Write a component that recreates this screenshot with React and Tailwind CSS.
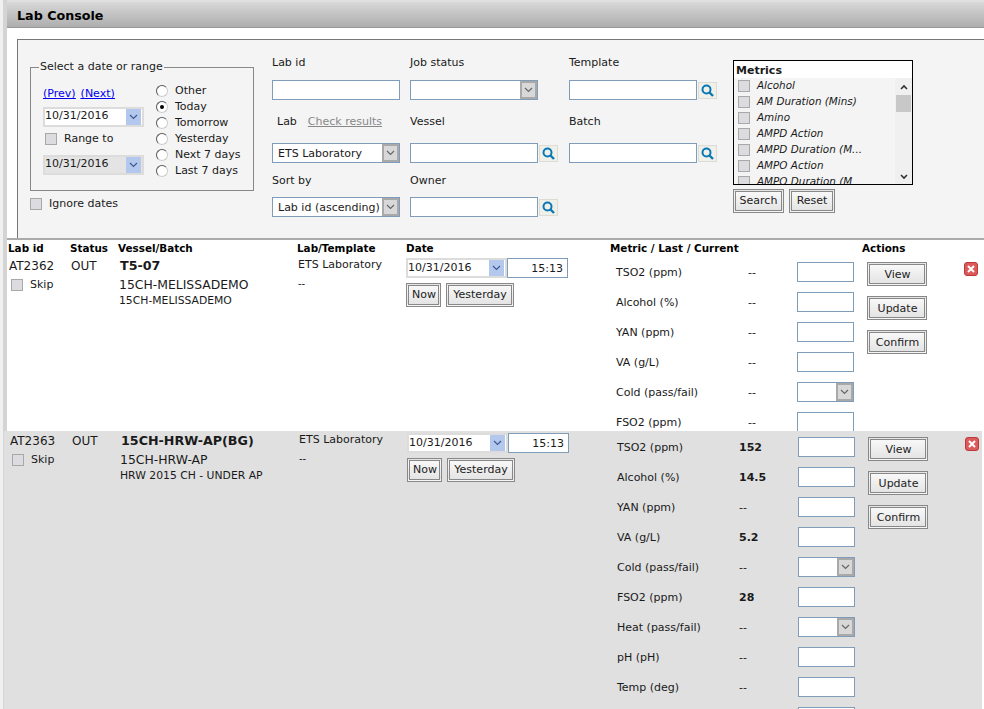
import React from 'react';

const inputCls = "block h-[20px] border border-[#7f9db9] bg-white px-1 text-[11px] outline-none";

function Chevron({ color = "#666" }) {
    return (
        <svg width="9" height="6" viewBox="0 0 9 6" fill="none">
            <path d="M1 1l3.5 3.5L8 1" stroke={color} strokeWidth="1.2" />
        </svg>
    );
}

function SearchIcon() {
    return (
        <span className="flex h-[17px] w-[19px] shrink-0 items-center justify-center border border-[#dcdcd4] bg-[#f0f0ea]">
            <svg width="13" height="13" viewBox="0 0 13 13" fill="none">
                <circle cx="5.5" cy="5.5" r="4" stroke="#0a78b4" strokeWidth="2" />
                <path d="M8.5 8.5l3.5 3.5" stroke="#0a78b4" strokeWidth="2.4" />
            </svg>
        </span>
    );
}

function Select({ value, width = "w-[128px]" }) {
    return (
        <div className={`flex h-[20px] items-stretch border border-[#7f9db9] bg-white ${width}`}>
            <span className="flex-1 overflow-hidden whitespace-nowrap pl-[5px] leading-[20px]">{value}</span>
            <span className="flex w-[17px] items-center justify-center border-2 border-[#a9a9a9] bg-[#d8d8d8]">
                <Chevron />
            </span>
        </div>
    );
}

function DateBox({ disabled, className = "" }) {
    return (
        <div className={`flex h-[20px] w-[101px] items-center justify-between border-2 border-[#dcdcdc] pr-[1px] ${disabled ? 'bg-[#e4e4e4]' : 'bg-white'} ${className}`}>
            <span>10/31/2016</span>
            <span className="flex h-[16px] w-[15px] items-center justify-center bg-[#b4c8ee]">
                <Chevron color="#3a5a94" />
            </span>
        </div>
    );
}

function Check({ label, italic }) {
    return (
        <label className="flex items-center">
            <input type="checkbox" className="h-[12px] w-[12px] shrink-0 appearance-none border border-[#a8a8a8] bg-[#dcdce0]" />
            {label && <span className={italic ? "ml-[7px] text-[10.4px] italic" : "ml-[7px]"}>{label}</span>}
        </label>
    );
}

function Radio({ label, checked }) {
    return (
        <div className="flex h-[16px] items-center">
            <span className="flex h-[12px] w-[12px] items-center justify-center rounded-full border border-t-[#555] border-l-[#555] border-r-[#ccc] border-b-[#ccc] bg-white">
                {checked && <span className="h-[4px] w-[4px] rounded-full bg-black" />}
            </span>
            <span className="ml-[7px]">{label}</span>
        </div>
    );
}

function Btn({ children, className = "" }) {
    return (
        <button type="button" className={`h-[24px] border-[3px] border-double border-[#888] bg-gradient-to-b from-[#f8f8f8] to-[#e4e4e4] text-[11px] text-[#222] ${className}`}>
            {children}
        </button>
    );
}

function Field({ label, children, className = "", labelCls = "h-[25px]" }) {
    return (
        <div className={className}>
            <div className={labelCls}>{label}</div>
            {children}
        </div>
    );
}

function LookupField({ label, className, labelCls }) {
    return (
        <Field label={label} className={className} labelCls={labelCls}>
            <div className="flex items-center gap-[1px]">
                <input className={`${inputCls} w-[128px]`} />
                <SearchIcon />
            </div>
        </Field>
    );
}

function MetricRow({ name, last, select, nameCls, lastCls }) {
    return (
        <div className="flex h-[30px] shrink-0 items-center">
            <span className={`${nameCls} pt-[2px]`}>{name}</span>
            <span className={`${lastCls} pt-[2px] ${last === '--' ? '' : 'font-bold'}`}>{last}</span>
            {select ? <Select value="" width="w-[57px]" /> : <input className={`${inputCls} w-[57px]`} />}
        </div>
    );
}

function JobRow({ labId, vessel, batch, batch2, metrics, nameCls, lastCls, className = "" }) {
    return (
        <div className={`flex items-start overflow-hidden ${className}`}>
            <div className="w-[62px] shrink-0 pl-[2px] pt-[3px]">
                <div className="text-[12px] leading-[15px]">{labId}</div>
                <div className="mt-[3px] pl-[2px]"><Check label="Skip" /></div>
            </div>
            <div className="w-[50px] shrink-0 pl-[2px] pt-[3px] text-[12px] leading-[15px]">OUT</div>
            <div className="w-[179px] shrink-0 pt-[2px]">
                <div className="pl-[1px] text-[12.7px] font-bold leading-[15px]">{vessel}</div>
                <div className="mt-[4px] text-[12.4px] leading-[15px]">{batch}</div>
                <div className="mt-[2px] text-[10.8px] leading-[14px]">{batch2}</div>
            </div>
            <div className="w-[108px] shrink-0 pt-[2px]">
                <div className="leading-[14px]">ETS Laboratory</div>
                <div className="mt-[4px] text-[10px]">--</div>
            </div>
            <div className="w-[204px] shrink-0 pt-[2px]">
                <div className="flex">
                    <DateBox />
                    <input defaultValue="15:13" className={`${inputCls} w-[61px] text-right`} />
                </div>
                <div className="mt-[5px] flex gap-[5px]">
                    <Btn className="w-[35px] pl-[1px]">Now</Btn>
                    <Btn className="w-[68px]">Yesterday</Btn>
                </div>
            </div>
            <div className="flex w-[257px] shrink-0 flex-col pt-[1px]">
                {metrics.map((m, i) => <MetricRow key={i} {...m} nameCls={nameCls} lastCls={lastCls} />)}
            </div>
            <div className="flex w-[97px] shrink-0 flex-col gap-[10px] pt-[6px]">
                <Btn className="w-[60px] pl-[1px] pt-[2px]">View</Btn>
                <Btn className="w-[60px] pl-[1px] pt-[2px]">Update</Btn>
                <Btn className="w-[60px] pl-[1px] pt-[2px]">Confirm</Btn>
            </div>
            <div className="mt-[6px] flex h-[14px] w-[14px] items-center justify-center rounded-[3px] border border-[#b83a3a] bg-[#dc5a5a]">
                <svg width="8" height="8" viewBox="0 0 8 8"><path d="M1 1l6 6M7 1l-6 6" stroke="#fff" strokeWidth="2" /></svg>
            </div>
        </div>
    );
}

const metricItems = ["Alcohol", "AM Duration (Mins)", "Amino", "AMPD Action", "AMPD Duration (M...", "AMPO Action", "AMPO Duration (M"];

const row1 = [
    { name: "TSO2 (ppm)", last: "--" },
    { name: "Alcohol (%)", last: "--" },
    { name: "YAN (ppm)", last: "--" },
    { name: "VA (g/L)", last: "--" },
    { name: "Cold (pass/fail)", last: "--", select: true },
    { name: "FSO2 (ppm)", last: "--" },
];

const row2 = [
    { name: "TSO2 (ppm)", last: "152" },
    { name: "Alcohol (%)", last: "14.5" },
    { name: "YAN (ppm)", last: "--" },
    { name: "VA (g/L)", last: "5.2" },
    { name: "Cold (pass/fail)", last: "--", select: true },
    { name: "FSO2 (ppm)", last: "28" },
    { name: "Heat (pass/fail)", last: "--", select: true },
    { name: "pH (pH)", last: "--" },
    { name: "Temp (deg)", last: "--" },
    { name: "", last: "" },
];

export default function App() {
    return (
        <div className="flex h-[709px] w-[984px] overflow-hidden bg-white font-['DejaVu_Sans',sans-serif] text-[11px] text-[#1a1a1a]">
            <div className="w-[7px] shrink-0 border-r-4 border-[#d4d4d4] bg-[#f0f0f0]" />
            <div className="flex min-w-0 flex-1 flex-col">
                <div className="h-[2px] shrink-0 bg-[#e0e0e0]" />
                <div className="flex h-[26px] shrink-0 items-center border-b border-[#999] bg-gradient-to-b from-[#d8d8d8] to-[#aeaeae] pl-[10px] pt-[2px] text-[12.7px] font-bold text-black">
                    Lab Console
                </div>

                {/* Filters */}
                <div className="ml-[10px] mt-[11px] flex h-[199px] shrink-0 border-l border-t border-[#777] bg-[#f4f4f4] pt-[15px]">
                    <div className="ml-[12px] mt-[5px] w-[242px] shrink-0">
                        <fieldset className="h-[131px] w-[224px] border border-[#888] pl-[12px]">
                            <legend className="ml-[-4px] px-[1px] leading-[14px]">Select a date or range</legend>
                            <div className="mt-[10px] flex">
                                <div className="w-[113px] shrink-0">
                                    <div className="mt-[2px] flex gap-[5px] text-[#0000ee] underline">
                                        <a>(Prev)</a><a>(Next)</a>
                                    </div>
                                    <DateBox className="mt-[4px]" />
                                    <div className="ml-[2px] mt-[4px] h-[17px]"><Check label="Range to" /></div>
                                    <DateBox disabled className="mt-[7px]" />
                                </div>
                                <div className="-mt-px">
                                    <Radio label="Other" />
                                    <Radio label="Today" checked />
                                    <Radio label="Tomorrow" />
                                    <Radio label="Yesterday" />
                                    <Radio label="Next 7 days" />
                                    <Radio label="Last 7 days" />
                                </div>
                            </div>
                        </fieldset>
                        <div className="mt-[5px]"><Check label="Ignore dates" /></div>
                    </div>
                    <div className="w-[138px] shrink-0">
                        <Field label="Lab id" className="h-[59px]"><input className={`${inputCls} w-[128px]`} /></Field>
                        <div className="flex h-[29px] items-start pl-[5px]">
                            <span>Lab</span>
                            <a className="ml-[11px] text-[#888] underline">Check results</a>
                        </div>
                        <div className="h-[30px]"><Select value="ETS Laboratory" /></div>
                        <Field label="Sort by" labelCls="h-[24px]"><Select value="Lab id (ascending)" /></Field>
                    </div>
                    <div className="w-[159px] shrink-0">
                        <Field label="Job status" className="h-[59px]"><Select value="" /></Field>
                        <LookupField label="Vessel" className="h-[59px]" labelCls="h-[29px]" />
                        <LookupField label="Owner" labelCls="h-[24px]" />
                    </div>
                    <div className="w-[164px] shrink-0">
                        <LookupField label="Template" className="h-[59px]" />
                        <LookupField label="Batch" labelCls="h-[29px]" />
                    </div>
                    <div className="mt-[5px] w-[180px] shrink-0">
                        <div className="h-[125px] w-[180px] overflow-hidden border border-black bg-white">
                            <div className="h-[17px] pl-[2px] font-bold leading-[20px]">Metrics</div>
                            <div className="flex h-[107px] bg-[#f4f4f4]">
                                <div className="h-[107px] flex-1 overflow-hidden pl-[4px]">
                                    {metricItems.map((m) => (
                                        <div key={m} className="flex h-[16px] items-center"><Check label={m} italic /></div>
                                    ))}
                                </div>
                                <div className="flex w-[17px] shrink-0 flex-col items-center bg-[#f0f0f0]">
                                    <div className="flex h-[17px] items-center"><svg width="8" height="6" viewBox="0 0 8 6" fill="none"><path d="M1 5l3-3 3 3" stroke="#333" strokeWidth="1.6" /></svg></div>
                                    <div className="h-[17px] w-[15px] bg-[#c8c8c8]" />
                                    <div className="flex-1" />
                                    <div className="flex h-[17px] items-center"><svg width="8" height="6" viewBox="0 0 8 6" fill="none"><path d="M1 1l3 3 3-3" stroke="#333" strokeWidth="1.6" /></svg></div>
                                </div>
                            </div>
                        </div>
                        <div className="mt-[4px] flex gap-[5px]">
                            <Btn className="w-[51px]">Search</Btn>
                            <Btn className="w-[46px]">Reset</Btn>
                        </div>
                    </div>
                </div>

                {/* Job list */}
                <div className="h-[2px] shrink-0 bg-[#aaa]" />
                <div className="flex h-[16px] shrink-0 items-center pl-[1px] pt-[2px] text-[10.4px] font-bold text-black">
                    <span className="w-[62px]">Lab id</span>
                    <span className="w-[48px]">Status</span>
                    <span className="w-[179px]">Vessel/Batch</span>
                    <span className="w-[109px]">Lab/Template</span>
                    <span className="w-[204px]">Date</span>
                    <span className="w-[252px]">Metric / Last / Current</span>
                    <span>Actions</span>
                </div>
                <JobRow
                    labId="AT2362"
                    vessel="T5-07"
                    batch="15CH-MELISSADEMO"
                    batch2="15CH-MELISSADEMO"
                    metrics={row1}
                    nameCls="w-[138px] pl-[6px]"
                    lastCls="w-[49px]"
                    className="h-[175px] shrink-0"
                />
                <JobRow
                    labId="AT2363"
                    vessel="15CH-HRW-AP(BG)"
                    batch="15CH-HRW-AP"
                    batch2="HRW 2015 CH - UNDER AP"
                    metrics={row2}
                    nameCls="w-[128px] pl-[6px]"
                    lastCls="w-[59px]"
                    className="ml-[-3px] mr-[2px] h-[278px] shrink-0 bg-[#e0e0e0] pl-[4px]"
                />
            </div>
        </div>
    );
}
